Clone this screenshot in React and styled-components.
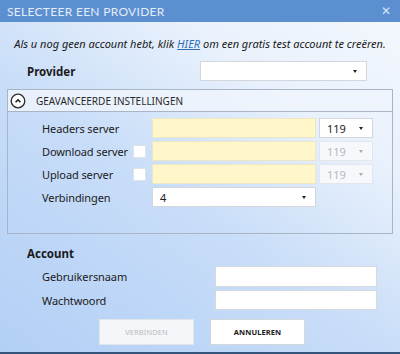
import React from 'react'
import styled, { createGlobalStyle } from 'styled-components'

const GlobalStyle = createGlobalStyle`
  html, body {
    margin: 0;
    padding: 0;
    background: #ffffff;
  }
  * {
    box-sizing: border-box;
  }
`

const Window = styled.div`
  width: 400px;
  height: 354px;
  display: flex;
  flex-direction: column;
  font-family: "Noto Sans", "Open Sans", sans-serif;
  color: #1b1b1b;
  overflow: hidden;
`

const TitleBar = styled.div`
  height: 22px;
  background: #5c8fd0;
  display: flex;
  align-items: center;
  justify-content: space-between;
  padding: 0 9px 0 7px;
`

const TitleText = styled.span`
  color: #e3ecf9;
  font-family: "Lato", "Noto Sans", sans-serif;
  font-size: 12px;
  letter-spacing: 0.3px;
`

const Close = styled.span`
  color: #d6e3f6;
  font-size: 12px;
  line-height: 1;
`

const Body = styled.div`
  flex: 1;
  display: flex;
  flex-direction: column;
  background: linear-gradient(35deg, #b2cff6 0%, #c8ddf8 45%, #e9f1fc 75%, #f3f7fd 100%);
  border-bottom: 2px solid #34547c;
  padding: 0 8px;
`

const Intro = styled.p`
  margin: 15px 0 0;
  text-align: center;
  font-style: italic;
  font-size: 11px;
  line-height: 14px;
  color: #1a1a1a;
`

const Link = styled.span`
  color: #2f6fb8;
  text-decoration: underline;
`

const ProviderRow = styled.div`
  display: flex;
  align-items: center;
  justify-content: space-between;
  margin-top: 10px;
  padding: 0 25px 0 19px;
  height: 20px;
`

const BoldLabel = styled.span`
  font-weight: bold;
  font-size: 11.5px;
`

const Select = styled.div`
  width: ${p => p.$w}px;
  height: ${p => p.$h || 20}px;
  background: ${p => (p.$disabled ? '#f6f8fb' : '#ffffff')};
  border: 1px solid ${p => (p.$disabled ? '#e3e6ea' : '#d3d6da')};
  display: flex;
  align-items: center;
  justify-content: space-between;
  padding: 0 9px 0 7px;
  font-size: 11px;
  color: ${p => (p.$disabled ? '#b5b8bc' : '#1b1b1b')};
`

const Caret = styled.span`
  width: 0;
  height: 0;
  border-left: 2.5px solid transparent;
  border-right: 2.5px solid transparent;
  border-top: 3px solid ${p => (p.$disabled ? '#a8abaf' : '#222')};
`

const Group = styled.div`
  margin-top: 8px;
  margin-right: -1px;
  margin-left: -1px;
  border: 1px solid #a9b5c4;
`

const GroupHeader = styled.div`
  height: 22px;
  display: flex;
  align-items: center;
  gap: 10px;
  padding-left: 2px;
  background: rgba(240, 245, 252, 0.8);
  border-bottom: 1px solid #a9b5c4;
  font-size: 10px;
  color: #2a2a2a;
`

const ToggleIcon = styled.svg`
  width: 16px;
  height: 16px;
  display: block;
`

const GroupContent = styled.div`
  display: grid;
  grid-template-columns: 91px 19px 164px 54px;
  row-gap: 3px;
  grid-auto-rows: 20px;
  align-items: center;
  padding: 6px 0 26px 34px;

  & > :nth-child(4n) {
    margin-left: 3px;
  }
`

const Label = styled.span`
  font-size: 11px;
  letter-spacing: -0.1px;
  color: #1b1b1b;
  white-space: nowrap;
`

const Check = styled.span`
  width: 13px;
  height: 13px;
  background: #ffffff;
  border: 1px solid #dfe3e8;
`

const Input = styled.div`
  height: ${p => p.$h || 20}px;
  background: ${p => (p.$yellow ? '#fff6c9' : '#ffffff')};
  border: 1px solid ${p => (p.$yellow ? '#ece6c4' : '#d6dade')};
`

const AccountTitle = styled.div`
  margin-top: 7px;
  padding-left: 19px;
`

const AccountRows = styled.div`
  display: grid;
  grid-template-columns: 173px 162px;
  row-gap: 3px;
  align-items: center;
  padding-left: 34px;
  margin-top: 3px;
`

const Buttons = styled.div`
  display: flex;
  justify-content: center;
  gap: 16px;
  margin-top: 9px;
  padding-left: 4px;
`

const Button = styled.div`
  width: 95px;
  height: 26px;
  display: flex;
  align-items: center;
  justify-content: center;
  background: ${p => (p.$disabled ? '#f4f6f9' : '#ffffff')};
  border: 1px solid ${p => (p.$disabled ? '#e1e5ea' : '#d4d8dd')};
  color: ${p => (p.$disabled ? '#b9bcc0' : '#1b1b1b')};
  font-size: 7.5px;
  font-weight: ${p => (p.$disabled ? 'normal' : 'bold')};
  letter-spacing: 0.1px;
`

const servers = [
  { label: 'Headers server', check: false, disabled: false },
  { label: 'Download server', check: true, disabled: true },
  { label: 'Upload server', check: true, disabled: true },
]

const App = () => {
  return (
    <>
      <GlobalStyle />
      <Window>
        <TitleBar>
          <TitleText>SELECTEER EEN PROVIDER</TitleText>
          <Close>✕</Close>
        </TitleBar>
        <Body>
          <Intro>
            Als u nog geen account hebt, klik <Link>HIER</Link> om een gratis test account te creëren.
          </Intro>
          <ProviderRow>
            <BoldLabel>Provider</BoldLabel>
            <Select $w={167}>
              <span />
              <Caret />
            </Select>
          </ProviderRow>
          <Group>
            <GroupHeader>
              <ToggleIcon viewBox="0 0 16 16">
                <circle cx="8" cy="8" r="6.8" fill="#ffffff" stroke="#2b2b2b" strokeWidth="1.3" />
                <path d="M5.6 9.2 L8 6.8 L10.4 9.2" fill="none" stroke="#1b1b1b" strokeWidth="1.6" />
              </ToggleIcon>
              GEAVANCEERDE INSTELLINGEN
            </GroupHeader>
            <GroupContent>
              {servers.map(s => (
                <React.Fragment key={s.label}>
                  <Label>{s.label}</Label>
                  {s.check ? <Check /> : <span />}
                  <Input $yellow />
                  <Select $w={54} $disabled={s.disabled}>
                    119
                    <Caret $disabled={s.disabled} />
                  </Select>
                </React.Fragment>
              ))}
              <Label>Verbindingen</Label>
              <span />
              <Select $w={164}>
                4
                <Caret />
              </Select>
            </GroupContent>
          </Group>
          <AccountTitle>
            <BoldLabel>Account</BoldLabel>
          </AccountTitle>
          <AccountRows>
            <Label>Gebruikersnaam</Label>
            <Input $h={21} />
            <Label>Wachtwoord</Label>
            <Input />
          </AccountRows>
          <Buttons>
            <Button $disabled>VERBINDEN</Button>
            <Button>ANNULEREN</Button>
          </Buttons>
        </Body>
      </Window>
    </>
  )
}

export default App
